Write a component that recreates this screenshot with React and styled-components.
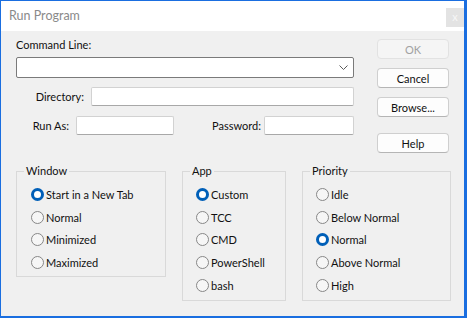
import React from 'react';
import styled, { createGlobalStyle } from 'styled-components';

const Global = createGlobalStyle`
  html, body { margin: 0; padding: 0; background: #f0f0f0; }
  body { font-family: Lato, "Noto Sans", sans-serif; }
`;

const Dialog = styled.div`
  box-sizing: border-box;
  width: 467px;
  height: 318px;
  display: flex;
  flex-direction: column;
  border-style: solid;
  border-color: #1a6ee0;
  border-width: 1px 3px 2px 1px;
  background: #f0f0f0;
  font-family: Lato, "Noto Sans", sans-serif;
  font-size: 11px;
  color: #111;
  overflow: hidden;
`;

const TitleBar = styled.div`
  height: 30px;
  flex: none;
  background: #fff;
  display: flex;
  align-items: flex-start;
  justify-content: space-between;
  padding-left: 8px;
`;

const Title = styled.span`
  font-size: 12.5px;
  color: #8a8a8a;
  line-height: 30px;
`;

const CloseButton = styled.div`
  width: 18px;
  height: 19px;
  margin-top: 7px;
  background: #e3e3e3;
  color: #f7f7f7;
  font-size: 11px;
  line-height: 18px;
  text-align: center;
`;

const Body = styled.div`
  flex: 1;
  display: flex;
  flex-direction: column;
  padding: 6px 0 0 15px;
`;

const TopSection = styled.div`
  display: flex;
  align-items: flex-start;
`;

const FormColumn = styled.div`
  width: 338px;
  display: flex;
  flex-direction: column;
`;

const ButtonColumn = styled.div`
  display: flex;
  flex-direction: column;
  margin-left: 23px;
  padding-top: 2px;
`;

const Label = styled.label`
  line-height: 16px;
  white-space: nowrap;
`;

const FieldLabel = styled.label`
  flex: none;
  width: ${(p) => p.$width}px;
  margin-right: ${(p) => p.$gap}px;
  text-align: right;
  white-space: nowrap;
  line-height: 16px;
`;

const Combo = styled.div`
  box-sizing: border-box;
  margin-top: 4px;
  height: 21px;
  background: #fff;
  border: 1px solid #7a7a7a;
  border-radius: 2px;
  display: flex;
  align-items: center;
  justify-content: flex-end;
  padding-right: 5px;
`;

const FieldRow = styled.div`
  display: flex;
  align-items: center;
  margin-top: ${(p) => p.$top}px;
`;

const TextBox = styled.div`
  box-sizing: border-box;
  flex: none;
  width: ${(p) => p.$width}px;
  height: 19px;
  background: #fff;
  border: 1px solid #d2d2d2;
  border-bottom-color: #a8a8a8;
  border-radius: 2px;
`;

const Button = styled.button`
  box-sizing: border-box;
  width: 72px;
  height: 20px;
  margin: ${(p) => p.$top || 0}px 0 0 0;
  padding: 0;
  font-family: inherit;
  font-size: 11px;
  color: ${(p) => (p.disabled ? '#a2a2a2' : '#111')};
  background: ${(p) => (p.disabled ? '#f5f5f5' : '#fdfdfd')};
  border: 1px solid ${(p) => (p.disabled ? '#e2e2e2' : '#cfcfcf')};
  border-bottom-color: ${(p) => (p.disabled ? '#e2e2e2' : '#b5b5b5')};
  border-radius: 4px;
`;

const GroupRow = styled.div`
  display: flex;
  align-items: flex-start;
  gap: 16px;
  margin-top: 10px;
`;

const GroupBox = styled.fieldset`
  box-sizing: border-box;
  margin: 0;
  padding: 0;
  min-width: 0;
  width: ${(p) => p.$width}px;
  height: ${(p) => p.$height}px;
  border: 1px solid #d9d9d9;
`;

const Legend = styled.legend`
  margin-left: 7px;
  padding: 0 2px;
  line-height: 16px;
`;

const GroupContent = styled.div`
  padding: 4px 0 0 ${(p) => p.$pad}px;
  display: flex;
  flex-direction: column;
`;

const RadioRow = styled.div`
  height: 22.75px;
  display: flex;
  align-items: center;
  gap: 2px;
  white-space: nowrap;
`;

const RadioCircle = styled.span`
  box-sizing: border-box;
  flex: none;
  width: 13px;
  height: 13px;
  border-radius: 50%;
  background: ${(p) => (p.$checked ? '#fff' : '#f6f6f6')};
  border: ${(p) => (p.$checked ? '3.5px solid #005fb8' : '1px solid #878787')};
`;

const Chevron = () => (
  <svg width="9" height="5" viewBox="0 0 9 5" fill="none">
    <path d="M0.5 0.5 L4.5 4.5 L8.5 0.5" stroke="#5a5a5a" strokeWidth="1" />
  </svg>
);

const Radio = ({ label, checked }) => (
  <RadioRow>
    <RadioCircle $checked={checked} />
    <span>{label}</span>
  </RadioRow>
);

const Group = ({ title, width, height, pad, items, selected }) => (
  <GroupBox $width={width} $height={height}>
    <Legend>{title}</Legend>
    <GroupContent $pad={pad}>
      {items.map((it) => (
        <Radio key={it} label={it} checked={it === selected} />
      ))}
    </GroupContent>
  </GroupBox>
);

export default function App() {
  return (
    <>
      <Global />
      <Dialog>
        <TitleBar>
          <Title>Run Program</Title>
          <CloseButton>x</CloseButton>
        </TitleBar>
        <Body>
          <TopSection>
            <FormColumn>
              <Label>Command Line:</Label>
              <Combo>
                <Chevron />
              </Combo>
              <FieldRow $top={9}>
                <FieldLabel $width={68} $gap={7}>Directory:</FieldLabel>
                <TextBox $width={263} />
              </FieldRow>
              <FieldRow $top={10}>
                <FieldLabel $width={53} $gap={7}>Run As:</FieldLabel>
                <TextBox $width={98} />
                <FieldLabel $width={87} $gap={3}>Password:</FieldLabel>
                <TextBox $width={90} />
              </FieldRow>
            </FormColumn>
            <ButtonColumn>
              <Button disabled>OK</Button>
              <Button $top={9}>Cancel</Button>
              <Button $top={9}>Browse...</Button>
              <Button $top={16}>Help</Button>
            </ButtonColumn>
          </TopSection>
          <GroupRow>
            <Group
              title="Window"
              width={150}
              height={114}
              pad={14}
              items={['Start in a New Tab', 'Normal', 'Minimized', 'Maximized']}
              selected="Start in a New Tab"
            />
            <Group
              title="App"
              width={104}
              height={138}
              pad={13}
              items={['Custom', 'TCC', 'CMD', 'PowerShell', 'bash']}
              selected="Custom"
            />
            <Group
              title="Priority"
              width={149}
              height={138}
              pad={13}
              items={['Idle', 'Below Normal', 'Normal', 'Above Normal', 'High']}
              selected="Normal"
            />
          </GroupRow>
        </Body>
      </Dialog>
    </>
  );
}
